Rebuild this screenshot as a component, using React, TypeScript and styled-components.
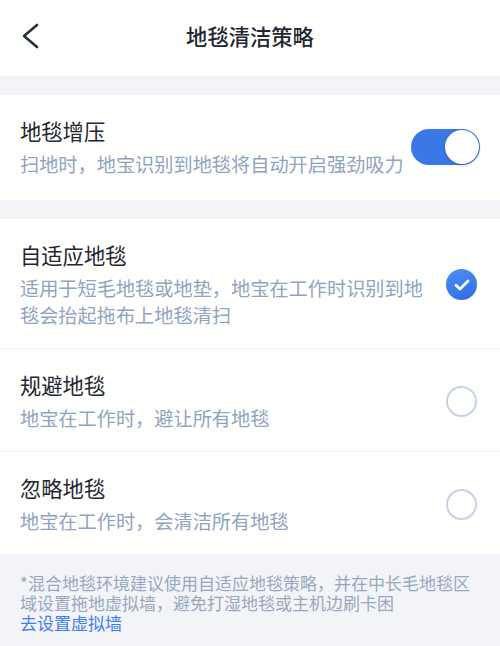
import React, { useState } from "react";
import styled, { createGlobalStyle } from "styled-components";

const Global = createGlobalStyle`
  html, body { margin: 0; padding: 0; background: #f3f4f7; }
  body { font-family: "Noto Sans CJK SC", "Noto Sans", sans-serif; }
  * { box-sizing: border-box; }
`;

const Page = styled.div`
  width: 500px;
  height: 646px;
  background: #f3f4f7;
  display: flex;
  flex-direction: column;
  overflow: hidden;
`;

const Header = styled.header`
  height: 76px;
  background: #fffffd;
  display: grid;
  grid-template-columns: 60px 1fr 60px;
  align-items: center;
  padding-bottom: 4px;
  margin-bottom: 19px;
`;

const BackButton = styled.button`
  border: 0;
  background: none;
  padding: 0 0 0 20px;
  height: 30px;
  display: flex;
  align-items: center;
  cursor: pointer;
`;

const Title = styled.h1`
  margin: 0;
  text-align: center;
  font-size: 21.3px;
  font-weight: 500;
  color: #1f2733;
  line-height: 30px;
`;

const Section = styled.section<{ $gap?: number }>`
  background: #fffffd;
  display: flex;
  flex-direction: column;
  margin-bottom: ${(p) => p.$gap ?? 0}px;
`;

const Row = styled.div<{ $divider?: boolean; $pb?: number }>`
  display: flex;
  align-items: center;
  padding: 21px 20px ${(p) => p.$pb ?? 19}px 20px;
  border-bottom: ${(p) => (p.$divider ? "1px solid #efeff0" : "none")};
`;

const RowText = styled.div`
  flex: 1;
  max-width: 410px;
  display: flex;
  flex-direction: column;
  gap: 5px;
`;

const RowTitle = styled.div`
  font-size: 21.3px;
  line-height: 30px;
  color: #1f2733;
`;

const RowDesc = styled.div`
  font-size: 19.2px;
  line-height: 27px;
  color: #8fa3c2;
`;

const Control = styled.div`
  margin-left: auto;
  display: flex;
  align-items: center;
  justify-content: flex-end;
`;

const Switch = styled.button<{ $on: boolean }>`
  position: relative;
  width: 69px;
  height: 36px;
  border-radius: 18px;
  border: 0;
  padding: 0;
  background: ${(p) => (p.$on ? "#3a78e8" : "#d9dee8")};
  cursor: pointer;
`;

const Knob = styled.span<{ $on: boolean }>`
  position: absolute;
  top: 1px;
  left: ${(p) => (p.$on ? "34px" : "1px")};
  width: 34px;
  height: 34px;
  border-radius: 50%;
  background: #ffffff;
  box-shadow: 0 1px 3px rgba(20, 40, 90, 0.35);
`;

const Radio = styled.button<{ $checked: boolean }>`
  width: 31px;
  height: 31px;
  margin-right: 3px;
  border-radius: 50%;
  padding: 0;
  display: flex;
  align-items: center;
  justify-content: center;
  cursor: pointer;
  border: ${(p) => (p.$checked ? "0" : "2px solid #c6d2e7")};
  background: ${(p) =>
    p.$checked ? "linear-gradient(160deg, #4d8ff6 0%, #2f6be4 100%)" : "transparent"};
`;

const Footer = styled.footer`
  flex: 1;
  padding: 19px 20px 0 20px;
  font-size: 17px;
  line-height: 20px;
  color: #98a7c0;
`;

const Link = styled.a`
  display: block;
  color: #3d7ef2;
  text-decoration: none;
  cursor: pointer;
`;

const Chevron = () => (
  <svg width="20" height="26" viewBox="0 0 20 26" fill="none">
    <path d="M17 2 L4 13 L17 24" stroke="#233040" strokeWidth="2.6" strokeLinecap="round" strokeLinejoin="round" />
  </svg>
);

const Check = () => (
  <svg width="16" height="12" viewBox="0 0 16 12" fill="none">
    <path d="M2 6.2 L6 10 L14 2" stroke="#ffffff" strokeWidth="2.8" strokeLinecap="round" strokeLinejoin="round" />
  </svg>
);

const options = [
  {
    key: "adaptive",
    title: "自适应地毯",
    desc: "适用于短毛地毯或地垫，地宝在工作时识别到地毯会抬起拖布上地毯清扫",
  },
  { key: "avoid", title: "规避地毯", desc: "地宝在工作时，避让所有地毯" },
  { key: "ignore", title: "忽略地毯", desc: "地宝在工作时，会清洁所有地毯" },
];

export default function App() {
  const [boost, setBoost] = useState(true);
  const [mode, setMode] = useState("adaptive");

  return (
    <Page>
      <Global />
      <Header>
        <BackButton aria-label="返回">
          <Chevron />
        </BackButton>
        <Title>地毯清洁策略</Title>
        <span />
      </Header>

      <Section $gap={19}>
        <Row $pb={22}>
          <RowText>
            <RowTitle>地毯增压</RowTitle>
            <RowDesc>扫地时，地宝识别到地毯将自动开启强劲吸力</RowDesc>
          </RowText>
          <Control>
            <Switch $on={boost} onClick={() => setBoost(!boost)} aria-label="地毯增压">
              <Knob $on={boost} />
            </Switch>
          </Control>
        </Row>
      </Section>

      <Section>
        {options.map((o, i) => (
          <Row key={o.key} $divider={i < options.length - 1}>
            <RowText>
              <RowTitle>{o.title}</RowTitle>
              <RowDesc>{o.desc}</RowDesc>
            </RowText>
            <Control>
              <Radio $checked={mode === o.key} onClick={() => setMode(o.key)} aria-label={o.title}>
                {mode === o.key && <Check />}
              </Radio>
            </Control>
          </Row>
        ))}
      </Section>

      <Footer>
        *混合地毯环境建议使用自适应地毯策略，并在中长毛地毯区域设置拖地虚拟墙，避免打湿地毯或主机边刷卡困
        <Link>去设置虚拟墙</Link>
      </Footer>
    </Page>
  );
}
